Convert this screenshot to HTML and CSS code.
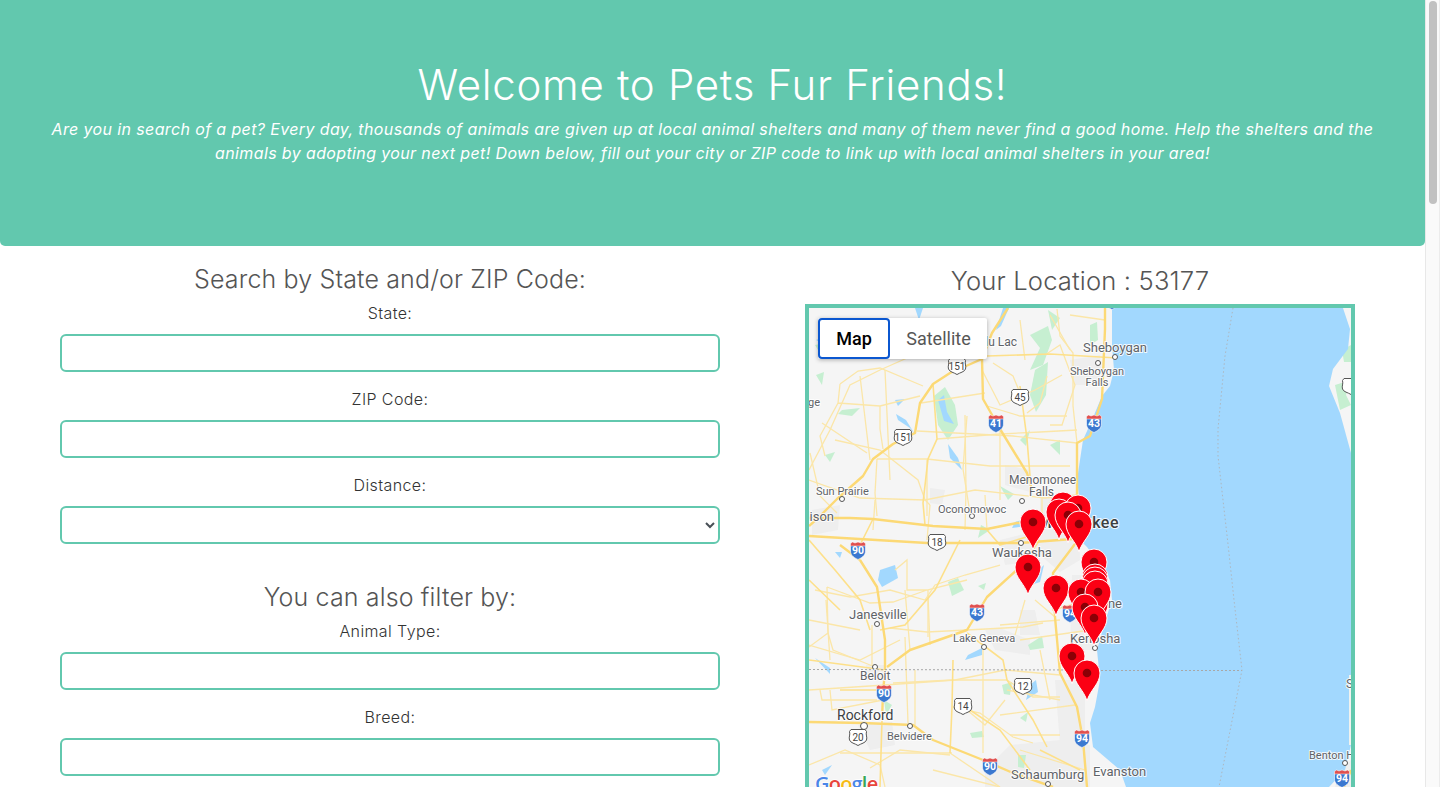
FILE: index.html
```html
<!DOCTYPE html>
<html lang="en">
<head>
<meta charset="utf-8">
<title>Pets Fur Friends</title>
<link rel="stylesheet" href="styles.css">
</head>
<body>
<div class="window">
<main class="page">
  <header class="hero">
    <h1 class="hero-title">Welcome to Pets Fur Friends!</h1>
    <p class="hero-text">Are you in search of a pet? Every day, thousands of animals are given up at local animal shelters and many of them never find a good home. Help the shelters and the<br>animals by adopting your next pet! Down below, fill out your city or ZIP code to link up with local animal shelters in your area!</p>
  </header>
  <div class="columns">
    <section class="form-col">
      <h3 class="section-title">Search by State and/or ZIP Code:</h3>
      <div class="field"><label class="field-label" for="state">State:</label><input class="control" id="state" type="text"></div>
      <div class="field"><label class="field-label" for="zip">ZIP Code:</label><input class="control" id="zip" type="text"></div>
      <div class="field"><label class="field-label" for="dist">Distance:</label><select class="control control-select" id="dist"><option></option></select></div>
      <h3 class="section-title section-title-second">You can also filter by:</h3>
      <div class="field"><label class="field-label" for="type">Animal Type:</label><input class="control" id="type" type="text"></div>
      <div class="field"><label class="field-label" for="breed">Breed:</label><input class="control" id="breed" type="text"></div>
    </section>
    <section class="map-col">
      <h3 class="location-title">Your Location : 53177</h3>
      <div class="map">
        <svg class="map-svg" viewBox="809 308 542 479" width="542" height="479" xmlns="http://www.w3.org/2000/svg">
          <defs>
            <g id="pin"><path class="pin-body" d="M0 28C-3 17-13 11-13 0A13 13 0 1 1 13 0C13 11 3 17 0 28Z"/><circle class="pin-dot" r="4.300"/></g>
            <g id="ishield"><path class="is-blue" d="M-7.500-6H7.500V1C7.500 6 3 8 0 9.500C-3 8-7.500 6-7.500 1Z"/><path class="is-red" d="M-7.500-6.500L-5.500-8L-3-7L0-8L3-7L5.500-8L7.500-6.500V-4H-7.500Z"/></g>
            <path id="usshield" class="us" d="M-7-7.500H7L8.500-5.500C7.500-2 9.500 0 8.500 3C7.500 6 3 6.500 0 8.500C-3 6.500-7.500 6-8.500 3C-9.500 0-7.500-2-8.500-5.500Z"/>
          </defs>
          <rect class="land" x="809" y="308" width="542" height="479"/>
          <g class="urban">
            <path d="M1040 498L1078 498L1080 560L1060 572L1040 555Z"/><path d="M1000 540L1040 530L1040 560L1005 565Z"/><path d="M1072 575L1100 575L1098 650L1070 650Z"/>
            <path d="M858 725L892 722L895 745L870 750Z"/><path d="M985 770L1010 745L1060 740L1090 745L1090 787L985 787Z"/><path d="M1055 680L1085 680L1085 745L1060 745Z"/>
            <path d="M866 665L885 665L885 680L866 680Z"/><path d="M812 510L840 505L838 530L812 535Z"/><path d="M1020 610L1035 610L1040 635L1020 635Z"/>
            <path d="M930 488L945 490L942 505L930 503Z"/><path d="M1005 465L1030 470L1030 492L1005 485Z"/><path d="M1070 360L1100 355L1103 385L1075 385Z"/>
            <path d="M985 630L1000 628L1030 640L1030 655L995 650Z"/><path d="M1340 770L1351 760L1351 787L1335 787Z"/>
          </g>
          <g class="green">
            <path d="M934 396L945 387L955 405L958 425L948 440L938 425Z"/><path d="M1030 335L1048 326L1052 340L1043 365L1030 370L1040 348Z"/><path d="M1035 370L1048 362L1046 395L1036 412L1030 395Z"/>
            <path d="M842 410L860 408L852 416L838 414Z"/><path d="M815 345L826 343L818 350Z"/><path d="M1000 486L1014 494L1008 500Z"/><path d="M1020 440L1030 430L1026 446Z"/><path d="M1050 445L1060 440L1060 455Z"/>
            <path d="M1048 310L1060 318L1052 330Z"/><path d="M1090 325L1097 322L1098 340L1090 345Z"/><path d="M816 375L824 372L822 385Z"/>
            <path d="M948 582L958 578L964 590L952 596Z"/><path d="M978 586L986 583L984 590Z"/><path d="M981 525L990 530L978 538Z"/>
            <path d="M1028 645L1042 636L1044 648L1030 650Z"/><path d="M1002 685L1012 682L1010 695L1004 694Z"/><path d="M970 733L982 731L984 737L972 738Z"/><path d="M1018 755L1026 755L1024 768L1018 767Z"/>
            <path d="M884 700L892 705L886 715Z"/><path d="M1020 718L1028 712L1026 722Z"/><path d="M1076 736L1085 734L1083 744L1077 745Z"/><path d="M825 455L835 452L830 462Z"/>
            <path d="M1342 350L1351 345L1351 362L1344 362Z"/><path d="M1335 385L1351 380L1346 395L1351 405L1340 410Z"/>
          </g>
          <path class="water" d="M1112 308L1112 345L1114 370L1110 386L1102 396L1092 420L1083 440L1080 460L1077 480L1079 496L1083 513L1080 540L1087 547L1100 565L1110 580L1112 600L1104 625L1097 650L1100 680L1095 707L1090 723L1093 747L1120 770L1126 787L1329 787L1345 770L1351 745L1351 453L1340 413L1329 386L1333 369L1348 349L1350 329L1343 308Z"/>
          <rect class="land-strip" x="1349" y="675" width="2" height="70"/>
          <g class="lakes">
            <path d="M938 400L944 395L947 412L954 424L944 421Z"/><path d="M895 400L905 399L898 406Z"/><path d="M896 414L906 420L916 436L910 428L898 420Z"/><path d="M948 444L958 458L962 470L950 458Z"/>
            <path d="M880 570L895 565L898 578L882 587L878 580Z"/><path d="M835 552L842 552L840 558Z"/><path d="M968 655L982 648L982 655L965 660Z"/><path d="M1036 572L1044 565L1040 582L1034 584Z"/>
            <path d="M1030 685L1036 680L1038 692L1026 700Z"/><path d="M815 658L830 668L830 674Z"/><path d="M822 770L832 765L825 775Z"/><path d="M1009 308L1001 326L996 330L1003 308Z"/>
            <path d="M1015 522L1028 518L1026 526L1012 528Z"/><path d="M816 340L830 335L826 345Z"/><path d="M915 308L923 308L919 320Z"/>
          </g>
          <g class="road-minor">
            <path d="M809 470L830 430L850 385L880 370L925 350L940 320"/><path d="M835 440L880 450L918 480L925 500L930 505"/><path d="M860 376L870 460M885 370L890 480"/>
            <path d="M937 439L1000 434L1040 432L1077 430M921 403L985 393M982 370L1000 405L1035 390L1062 375"/><path d="M965 415L966 490L965 530M1000 430L1000 500M1045 355L1060 345L1075 385L1062 425L1050 425"/>
            <path d="M809 480L860 498L925 500L975 490L1045 498L1077 495"/><path d="M875 500L873 530M930 505L927 540M985 495L987 530M1042 498L1042 530"/><path d="M1020 320L1025 360M1050 315L1070 350M1070 315L1105 320"/>
            <path d="M815 590L850 597L890 590L925 600L935 585L965 575L1000 565"/><path d="M809 620L860 630M809 645L860 660L900 640"/><path d="M826 600L830 660M872 625L872 665M928 595L930 645M905 590L910 650"/>
            <path d="M809 690L885 685L955 680L1005 670L1060 675M830 690L832 710L883 700"/><path d="M915 670L915 725M1007 690L1060 700M1000 715L1075 705M955 700L985 725L1005 700"/><path d="M870 768L900 750L950 755M809 765L845 750L880 765L885 787M950 753L1000 787"/>
            <path d="M1035 600L1055 617M1000 625L1060 620M1020 640L1090 630M1025 600L1015 635M1040 650L1050 700M1010 735L1060 735M1020 750L1085 770M933 770L1000 787"/>
            <path d="M840 384L858 371L880 368L923 386M840 384L838 403L820 436L825 456M838 403L880 406L920 396M880 406L880 429L883 449M822 423L867 453"/>
            <path d="M877 459L927 459L990 466L1027 466L1070 466M877 459L875 493L877 516M927 459L927 516M967 416L963 469L970 513M917 431L1013 436L1077 443"/>
            <path d="M987 406L1020 416L1067 416M993 363L1013 376L1020 393M1047 376L1040 403L1027 413M1057 309L1060 336L1073 353L1073 406L1077 443M810 453L820 496L837 513"/>
            <path d="M827 587L870 603L893 602L927 590L967 580M827 587L828 633L809 647M828 633L833 650L875 667M895 570L907 560L907 590L928 590L928 637"/>
            <path d="M890 628L927 632L967 630M905 637L908 723M953 707L980 713L1013 737L1033 743M820 690L822 700L877 700M840 753L877 753L952 753"/>
            <path d="M893 683L953 680L1007 680M983 650L983 707L983 753M1007 680L1033 697L1060 697M1043 623L1023 627L967 630"/>
          </g>
          <g class="road-mid">
            <path d="M933 384L937 439L928 459L923 503L925 525"/><path d="M987 356L1050 354L1117 358"/><path d="M1020 386L1027 439L1030 476"/><path d="M809 540L835 570L860 600L870 630"/>
            <path d="M960 540L935 590L905 625L880 630"/><path d="M809 580L840 610M1020 567L1040 540"/><path d="M967 633L1003 660L1007 680L1033 720L1047 747M1040 750L1080 770"/><path d="M953 660L952 707L950 753"/><path d="M840 690L885 690M882 720L880 787M1090 600L1052 610"/>
            <path d="M955 700L1000 730L1030 770"/><path d="M809 660L885 670"/><path d="M873 519L860 545M987 530L1000 545L1040 533"/>
          </g>
          <g class="road-major">
            <path d="M1008 308L992 333L982 359L983 399L1000 429L1027 473L1032 490"/><path d="M982 359L950 373L933 384L920 403L915 433L893 444L873 459L863 476L837 499L820 516L809 526"/>
            <path d="M1105 308L1105 329L1102 399L1090 436L1077 443L1077 496L1078 540"/><path d="M809 518L850 518L873 519L933 526L987 529L1017 523L1077 523"/><path d="M809 536L927 543L1020 543L1073 539"/>
            <path d="M860 560L877 587L885 640L885 670L883 693L882 720"/><path d="M809 722L863 723L913 725L933 740L983 760L1013 773L1053 787"/><path d="M1020 567L987 597L967 630L933 642L910 650L887 667"/>
            <path d="M1078 540L1053 573L1055 617L1060 673L1077 707L1083 740L1087 787"/><path d="M840 545L860 560M1344 787L1351 770"/>
          </g>
          <path class="state-line" d="M809 669.500L1097 670"/><path class="state-line" d="M1097 670.500L1242 670.500"/>
          <path class="lake-line" d="M1233 308L1225 356L1218 429L1218 456L1228 544L1234 600L1242 670L1219 787"/>
          <g class="dots"><circle cx="875" cy="667" r="2.500"/><circle cx="877" cy="624" r="2.500"/><circle cx="984" cy="647" r="2.500"/><circle cx="864" cy="726" r="3.500"/><circle cx="910" cy="726" r="2.500"/><circle cx="1095" cy="648" r="2.500"/><circle cx="972" cy="516" r="2.500"/><circle cx="842" cy="499" r="2.500"/><circle cx="1022" cy="501" r="2.500"/><circle cx="1021" cy="543" r="2.500"/><circle cx="1048" cy="784" r="2.500"/><circle cx="1098" cy="363" r="2.500"/><circle cx="1115" cy="357" r="2.500"/><circle cx="1345" cy="763" r="2.500"/></g>

          <text class="lbl lbl-md" x="1017" y="346" text-anchor="end">Fond du Lac</text>
          <text class="lbl lbl-city" x="1083" y="352">Sheboygan</text>
          <text class="lbl lbl-sm" x="1097" y="375" text-anchor="middle">Sheboygan</text>
          <text class="lbl lbl-sm" x="1097" y="386" text-anchor="middle">Falls</text>
          <text class="lbl lbl-sm" x="808" y="406">ge</text>
          <text class="lbl lbl-md" x="1009" y="484">Menomonee</text>
          <text class="lbl lbl-md" x="1029" y="496">Falls</text>
          <text class="lbl lbl-sm" x="816" y="495">Sun Prairie</text>
          <text class="lbl lbl-sm" x="938" y="513">Oconomowoc</text>
          <text class="lbl lbl-city" x="834" y="521" text-anchor="end">Madison</text>
          <text class="lbl lbl-big" x="1119" y="528" text-anchor="end">Milwaukee</text>
          <text class="lbl lbl-city" x="992" y="557">Waukesha</text>
          <text class="lbl lbl-city" x="849" y="619">Janesville</text>
          <text class="lbl lbl-sm" x="953" y="642">Lake Geneva</text>
          <text class="lbl lbl-city" x="1122" y="608" text-anchor="end">Racine</text>
          <text class="lbl lbl-city" x="1070" y="643">Kenosha</text>
          <text class="lbl lbl-md" x="860" y="680">Beloit</text>
          <text class="lbl lbl-rock" x="837" y="720">Rockford</text>
          <text class="lbl lbl-sm" x="887" y="740">Belvidere</text>
          <text class="lbl lbl-city" x="1011" y="779">Schaumburg</text>
          <text class="lbl lbl-city" x="1093" y="776">Evanston</text>
          <text class="lbl lbl-sm" x="1309" y="759">Benton Harbor</text>
          <text class="lbl lbl-md" x="1346" y="688">St Joseph</text>

          <g class="shields">
            <use href="#ishield" x="1112" y="300"/>
            <g transform="translate(996 423)"><use href="#ishield"/><text class="sh-i" y="4" text-anchor="middle">41</text></g>
            <g transform="translate(1094 423)"><use href="#ishield"/><text class="sh-i" y="4" text-anchor="middle">43</text></g>
            <g transform="translate(858 550)"><use href="#ishield"/><text class="sh-i" y="4" text-anchor="middle">90</text></g>
            <g transform="translate(977 612)"><use href="#ishield"/><text class="sh-i" y="4" text-anchor="middle">43</text></g>
            <g transform="translate(1070 613)"><use href="#ishield"/><text class="sh-i" y="4" text-anchor="middle">94</text></g>
            <g transform="translate(884 693)"><use href="#ishield"/><text class="sh-i" y="4" text-anchor="middle">90</text></g>
            <g transform="translate(1082 738)"><use href="#ishield"/><text class="sh-i" y="4" text-anchor="middle">94</text></g>
            <g transform="translate(990 766)"><use href="#ishield"/><text class="sh-i" y="4" text-anchor="middle">90</text></g>
            <g transform="translate(1342 778)"><use href="#ishield"/><text class="sh-i" y="4" text-anchor="middle">94</text></g>
            <g transform="translate(957 366)"><use href="#usshield"/><text class="sh-u" y="3.500" text-anchor="middle">151</text></g>
            <g transform="translate(1020 397)"><use href="#usshield"/><text class="sh-u" y="3.500" text-anchor="middle">45</text></g>
            <g transform="translate(903 437)"><use href="#usshield"/><text class="sh-u" y="3.500" text-anchor="middle">151</text></g>
            <g transform="translate(937 542)"><use href="#usshield"/><text class="sh-u" y="3.500" text-anchor="middle">18</text></g>
            <g transform="translate(1023 686)"><use href="#usshield"/><text class="sh-u" y="3.500" text-anchor="middle">12</text></g>
            <g transform="translate(963 706)"><use href="#usshield"/><text class="sh-u" y="3.500" text-anchor="middle">14</text></g>
            <g transform="translate(858 737)"><use href="#usshield"/><text class="sh-u" y="3.500" text-anchor="middle">20</text></g>
            <g transform="translate(1351 386)"><use href="#usshield"/></g>
          </g>

          <text class="google" x="815" y="791"><tspan class="g-b">G</tspan><tspan class="g-r">o</tspan><tspan class="g-y">o</tspan><tspan class="g-b">g</tspan><tspan class="g-g">l</tspan><tspan class="g-r">e</tspan></text>

          <g class="pins">
            <use href="#pin" x="1063" y="505"/><use href="#pin" x="1078" y="508"/><use href="#pin" x="1059" y="512"/><use href="#pin" x="1068" y="515"/><use href="#pin" x="1033" y="522"/><use href="#pin" x="1079" y="524"/>
            <use href="#pin" x="1094" y="562"/><use href="#pin" x="1028" y="567"/><use href="#pin" x="1095" y="577"/><use href="#pin" x="1095" y="580"/><use href="#pin" x="1095" y="584"/><use href="#pin" x="1056" y="588"/><use href="#pin" x="1081" y="592"/><use href="#pin" x="1095" y="604"/><use href="#pin" x="1098" y="592"/><use href="#pin" x="1085" y="607"/><use href="#pin" x="1094" y="618"/><use href="#pin" x="1072" y="656"/><use href="#pin" x="1087" y="673"/>
          </g>
        </svg>
        <div class="map-type">
          <button class="map-btn map-btn-active" type="button">Map</button>
          <button class="map-btn" type="button">Satellite</button>
        </div>
      </div>
    </section>
  </div>
</main>
<div class="scrollbar"><div class="scroll-thumb"></div></div>
</div>
</body>
</html>
```
FILE: styles.css
```css
* { box-sizing: border-box; }
html, body { margin: 0; height: 100%; overflow: hidden; }
body { font-family: Inter, "Open Sans", sans-serif; color: #212529; background: #fff; }
.window { display: flex; height: 787px; overflow: hidden; }
.page { flex: 1; min-width: 0; }
.scrollbar { width: 15px; flex: none; background: #fafafa; border-left: 1px solid #e8e8e8; border-right: 1px solid #ececec; padding: 1px 2px 0 3px; }
.scroll-thumb { height: 203px; background: #c1c1c1; border-radius: 4px; }

.hero { height: 246px; background: #62c8ae; color: #fff; text-align: center; padding-top: 61px; border-radius: 0 0 5px 5px; }
.hero-title { margin: 0 0 8px; font-size: 42px; line-height: 48px; font-weight: 300; letter-spacing: 0.7px; }
.hero-text { margin: 0; font-size: 16px; line-height: 24px; font-style: italic; font-weight: 400; letter-spacing: 0.37px; }

.columns { display: flex; align-items: flex-start; }
.form-col { width: 780px; padding: 19px 60px 0; text-align: center; flex: none; }
.section-title { margin: 0 0 8px; font-size: 25px; line-height: 29px; font-weight: 300; color: #555; letter-spacing: 0.14px; }
.section-title-second { margin-top: 39px; }
.field { margin-bottom: 16px; }
.field-label { display: block; margin-bottom: 10px; font-size: 16px; line-height: 22px; font-weight: 300; color: #333; letter-spacing: 0.4px; }
.control { display: block; width: 100%; height: 38px; border: 2px solid #62c8ae; border-radius: 6px; background: #fff; padding: 6px 12px; font: inherit; color: #495057; }
.control-select { padding: 6px 8px; }

.map-col { width: 600px; flex: none; display: flex; flex-direction: column; align-items: center; padding-top: 20px; }
.location-title { margin: 0 0 8px; font-size: 25.6px; line-height: 30px; font-weight: 300; color: #555; letter-spacing: 0.15px; }
.map { position: relative; width: 550px; height: 500px; border: 4px solid #62c8ae; overflow: hidden; flex: none; background: #f5f5f5; }
.map-svg { display: block; }
.land { fill: #f5f5f5; }
.land-strip { fill: #f0f2ef; }
.water { fill: #a2d8fe; }
.urban { fill: #eeeeee; }
.green { fill: #c6efd1; }
.lakes { fill: #a2d8fe; }
.road-minor path { fill: none; stroke: #fbe6a8; stroke-width: 1.3; }
.road-mid path { fill: none; stroke: #fde08a; stroke-width: 1.6; }
.road-major path { fill: none; stroke: #fcd975; stroke-width: 2.4; stroke-linejoin: round; }
.state-line { fill: none; stroke: #a8a8a8; stroke-width: 1; stroke-dasharray: 2 2; }
.lake-line { fill: none; stroke: #adb7c0; stroke-width: 1; stroke-dasharray: 1.500 2.500; }
.dots circle { fill: #fff; stroke: #555; stroke-width: 1; }
.lbl { font-family: Roboto, sans-serif; fill: #5f6368; stroke: #fff; stroke-width: 2px; stroke-opacity: 0.85; paint-order: stroke; stroke-linejoin: round; }
.lbl-sm { font-size: 11px; }
.lbl-md { font-size: 12px; }
.lbl-city { font-size: 13px; }
.lbl-rock { font-size: 14px; fill: #3c4043; }
.lbl-big { font-size: 16px; font-weight: 500; fill: #3c4043; letter-spacing: 0.5px; }
.is-blue { fill: #3b78d0; stroke: #fff; stroke-width: 0.6; }
.is-red { fill: #e0504f; stroke: #fff; stroke-width: 0.5; }
.us { fill: #fff; stroke: #555; stroke-width: 1; }
.sh-i { font-family: Roboto, sans-serif; font-size: 10.5px; font-weight: 700; fill: #fff; }
.sh-u { font-family: Roboto, sans-serif; font-size: 10px; fill: #444; }
.pin-body { fill: #fb0014; stroke: #fff; stroke-width: 1; }
.pin-dot { fill: #8a0006; }
.google { font-family: "Open Sans", Roboto, sans-serif; font-size: 20px; font-weight: 600; letter-spacing: -0.8px; stroke: #fff; stroke-width: 1.500px; paint-order: stroke; }
.g-b { fill: #4a86e8; }
.g-r { fill: #e8453c; }
.g-y { fill: #f6bb18; }
.g-g { fill: #3aa757; }

.map-type { position: absolute; left: 9px; top: 10px; display: flex; background: #fff; border-radius: 2px; box-shadow: 0 1px 4px rgba(0, 0, 0, 0.3); }
.map-btn { height: 41px; width: 72px; border: 0; background: transparent; padding: 0; font-family: Roboto, sans-serif; font-size: 18px; color: #565656; }
.map-btn + .map-btn { width: 97px; }
.map-btn-active { color: #000; font-weight: 500; outline: 2px solid #0b57d0; outline-offset: -2px; border-radius: 4px; }
```
